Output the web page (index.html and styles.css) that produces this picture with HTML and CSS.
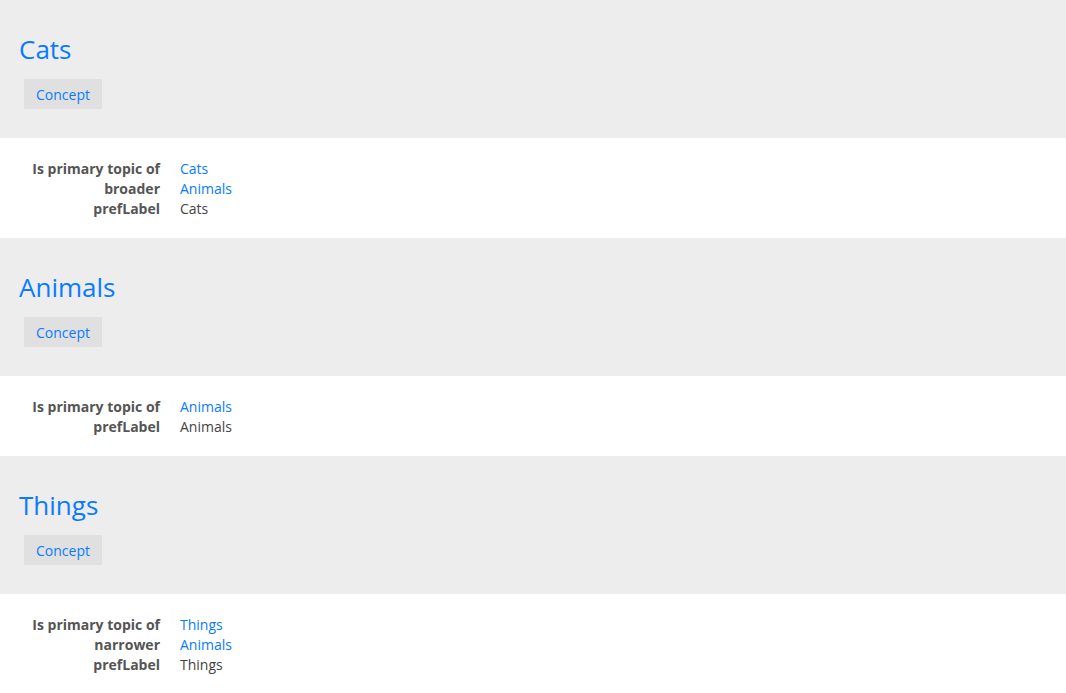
FILE: index.html
```html
<!DOCTYPE html>
<html lang="en">
<head>
  <meta charset="UTF-8">
  <title>Resources</title>
  <link rel="stylesheet" href="styles.css">
</head>
<body>
  <div class="resource">
    <div class="head">
      <h1><a href="#cats">Cats</a></h1>
      <a class="type" href="#concept">Concept</a>
    </div>
    <div class="props">
      <div class="label">Is primary topic of</div><div class="value"><a href="#cats">Cats</a></div>
      <div class="label">broader</div><div class="value"><a href="#animals">Animals</a></div>
      <div class="label">prefLabel</div><div class="value">Cats</div>
    </div>
  </div>

  <div class="resource">
    <div class="head">
      <h1><a href="#animals">Animals</a></h1>
      <a class="type" href="#concept">Concept</a>
    </div>
    <div class="props">
      <div class="label">Is primary topic of</div><div class="value"><a href="#animals">Animals</a></div>
      <div class="label">prefLabel</div><div class="value">Animals</div>
    </div>
  </div>

  <div class="resource">
    <div class="head">
      <h1><a href="#things">Things</a></h1>
      <a class="type" href="#concept">Concept</a>
    </div>
    <div class="props">
      <div class="label">Is primary topic of</div><div class="value"><a href="#things">Things</a></div>
      <div class="label">narrower</div><div class="value"><a href="#animals">Animals</a></div>
      <div class="label">prefLabel</div><div class="value">Things</div>
    </div>
  </div>
</body>
</html>
```

FILE: styles.css
```css
body {
  font-family: "Open Sans", "Liberation Sans", sans-serif;
  margin: 0;
  background: #fff;
  color: #444;
  font-size: 14px;
}
a {
  color: #0a7bff;
  text-decoration: none;
}
.head {
  background: #ededed;
  padding: 34px 19px 29px;
}
.head h1 {
  margin: 0 0 14px;
  font-size: 26px;
  font-weight: normal;
  line-height: 31px;
}
.type {
  display: inline-block;
  margin-left: 5px;
  padding: 6px 12px 4px;
  line-height: 20px;
  background: #e0e0e0;
}
.props {
  display: grid;
  grid-template-columns: 160px auto;
  column-gap: 20px;
  padding: 21px 0 19px;
  line-height: 20px;
}
.label {
  text-align: right;
  font-weight: bold;
  color: #555;
}
```
